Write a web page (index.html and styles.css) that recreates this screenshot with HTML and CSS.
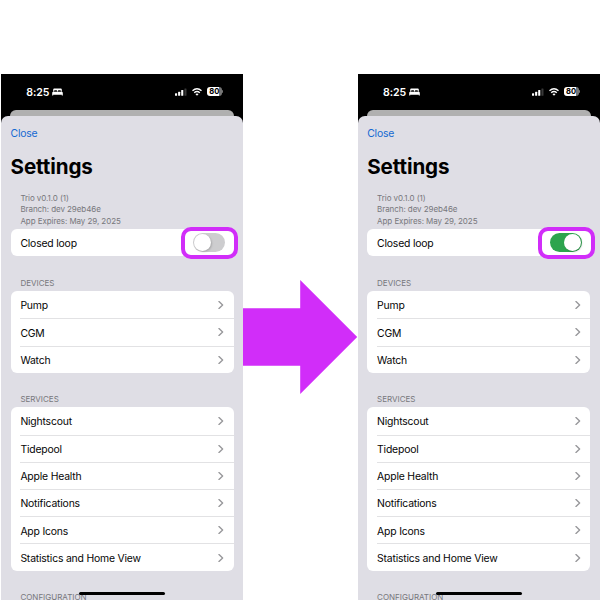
FILE: index.html
```html
<!DOCTYPE html>
<html lang="en">
<head>
<meta charset="utf-8">
<title>Closed loop setting</title>
<link rel="stylesheet" href="styles.css">
</head>
<body>
<svg class="defs" width="0" height="0">
  <symbol id="chevron" viewBox="0 0 6 8"><path d="M1 .6 4.6 4 1 7.4" fill="none" stroke="#98989b" stroke-width="1.4" stroke-linecap="round" stroke-linejoin="round"/></symbol>
  <symbol id="bed" viewBox="0 0 11 8"><path fill="#fff" d="M1.2 3.5V1.4Q1.2.4 2.2.4H8.8Q9.8.4 9.8 1.4V3.5H8.9V3Q8.9 2.3 8.2 2.3H6.6Q5.9 2.3 5.9 3V3.5H5.1V3Q5.1 2.3 4.4 2.3H2.8Q2.1 2.3 2.1 3V3.5ZM1.3 3.8H9.7Q10.8 3.8 10.8 5.1V7.5H9.8V6.7H1.2V7.5H.2V5.1Q.2 3.8 1.3 3.8Z"/></symbol>
  <symbol id="signal" viewBox="0 0 12 8"><g fill="#fff"><rect x="0" y="5.2" width="2.1" height="2.6" rx=".5"/><rect x="3.1" y="3.8" width="2.1" height="4" rx=".5"/><rect x="6.2" y="2.1" width="2.1" height="5.7" rx=".5"/><rect x="9.4" y=".5" width="2.1" height="7.3" rx=".5" opacity=".22"/></g></symbol>
  <symbol id="wifi" viewBox="0 0 10 8"><g fill="none" stroke="#fff" stroke-width="1.4"><path d="M.5 2.8Q5-1.3 9.5 2.8"/><path d="M2.2 4.7Q5 2.2 7.8 4.7"/></g><path fill="#fff" d="M3.4 6Q5 4.8 6.6 6L5 7.7Z"/></symbol>
</svg>
<main class="stage">
  <section class="phone">
    <header class="status">
      <span class="time">8:25</span><svg class="bed"><use href="#bed"/></svg>
      <svg class="signal"><use href="#signal"/></svg><svg class="wifi"><use href="#wifi"/></svg><span class="battery">80</span>
    </header>
    <div class="behind"></div>
    <div class="sheet">
      <a class="close">Close</a>
      <h1>Settings</h1>
      <p class="meta">Trio v0.1.0 (1)<br>Branch: dev 29eb46e<br>App Expires: May 29, 2025</p>
      <div class="card loop"><div class="row"><span>Closed loop</span><span class="marker"><span class="toggle"></span></span></div></div>
      <h2>DEVICES</h2>
      <div class="card">
        <div class="row"><span>Pump</span><svg><use href="#chevron"/></svg></div>
        <div class="row"><span>CGM</span><svg><use href="#chevron"/></svg></div>
        <div class="row"><span>Watch</span><svg><use href="#chevron"/></svg></div>
      </div>
      <h2>SERVICES</h2>
      <div class="card">
        <div class="row"><span>Nightscout</span><svg><use href="#chevron"/></svg></div>
        <div class="row"><span>Tidepool</span><svg><use href="#chevron"/></svg></div>
        <div class="row"><span>Apple Health</span><svg><use href="#chevron"/></svg></div>
        <div class="row"><span>Notifications</span><svg><use href="#chevron"/></svg></div>
        <div class="row"><span>App Icons</span><svg><use href="#chevron"/></svg></div>
        <div class="row"><span>Statistics and Home View</span><svg><use href="#chevron"/></svg></div>
      </div>
      <h2>CONFIGURATION</h2>
    </div>
    <div class="home"></div>
  </section>
  <svg class="arrow" viewBox="0 0 115 114"><path fill="#d12df9" d="M0 28.3H57.2V0L114.2 57 57.2 114V85.7H0Z"/></svg>
  <section class="phone">
    <header class="status">
      <span class="time">8:25</span><svg class="bed"><use href="#bed"/></svg>
      <svg class="signal"><use href="#signal"/></svg><svg class="wifi"><use href="#wifi"/></svg><span class="battery">80</span>
    </header>
    <div class="behind"></div>
    <div class="sheet">
      <a class="close">Close</a>
      <h1>Settings</h1>
      <p class="meta">Trio v0.1.0 (1)<br>Branch: dev 29eb46e<br>App Expires: May 29, 2025</p>
      <div class="card loop"><div class="row"><span>Closed loop</span><span class="marker"><span class="toggle on"></span></span></div></div>
      <h2>DEVICES</h2>
      <div class="card">
        <div class="row"><span>Pump</span><svg><use href="#chevron"/></svg></div>
        <div class="row"><span>CGM</span><svg><use href="#chevron"/></svg></div>
        <div class="row"><span>Watch</span><svg><use href="#chevron"/></svg></div>
      </div>
      <h2>SERVICES</h2>
      <div class="card">
        <div class="row"><span>Nightscout</span><svg><use href="#chevron"/></svg></div>
        <div class="row"><span>Tidepool</span><svg><use href="#chevron"/></svg></div>
        <div class="row"><span>Apple Health</span><svg><use href="#chevron"/></svg></div>
        <div class="row"><span>Notifications</span><svg><use href="#chevron"/></svg></div>
        <div class="row"><span>App Icons</span><svg><use href="#chevron"/></svg></div>
        <div class="row"><span>Statistics and Home View</span><svg><use href="#chevron"/></svg></div>
      </div>
      <h2>CONFIGURATION</h2>
    </div>
    <div class="home"></div>
  </section>
</main>
</body>
</html>
```
FILE: styles.css
```css
* { box-sizing: border-box; }
body { margin: 0; background: #fff; font-family: Inter, "Liberation Sans", sans-serif; color: #050505; }
.defs { position: absolute; }
.stage { width: 600px; height: 600px; padding: 74.4px 0 0 1px; display: flex; overflow: hidden; }
.phone { position: relative; width: 242.3px; height: 525.6px; flex: none; background: #000; overflow: hidden; display: flex; flex-direction: column; }
.status { height: 35.4px; flex: none; display: flex; align-items: center; padding: 0 21.5px 1px 25.3px; color: #fff; }
.time { font-size: 10.6px; font-weight: 600; width: 23px; letter-spacing: -.1px; white-space: nowrap; padding-top: 1px; }
.bed { width: 11px; height: 8px; margin-left: 2.7px; }
.signal { width: 12px; height: 8px; margin-left: auto; margin-right: 5px; }
.wifi { width: 10px; height: 8px; margin-right: 5px; }
.battery { position: relative; width: 15px; height: 9px; border-radius: 3px; background: linear-gradient(90deg, #fff 80%, #777 80%); color: #000; font-size: 7.6px; font-weight: 700; line-height: 9px; text-align: center; letter-spacing: -.1px; }
.battery::after { content: ""; position: absolute; left: 15.6px; top: 3px; width: 1px; height: 3px; border-radius: 0 1px 1px 0; background: #777; }
.behind { height: 12px; flex: none; margin: 0 9.3px; background: #b0b0b0; border-radius: 6px 6px 0 0; }
.sheet { position: relative; flex: 1; margin-top: -6px; background: #dfdee5; border-radius: 7px 7px 0 0; padding: 11.7px 9.6px 0 9.5px; display: flex; flex-direction: column; }
.close { color: #1469d2; font-size: 10.4px; line-height: 14px; height: 14px; letter-spacing: -.18px; }
h1 { margin: 12.5px 0 0; font-size: 20.6px; line-height: 25px; height: 25px; font-weight: 700; letter-spacing: -.1px; color: #000; }
.meta { margin: 14.3px 0 0 9.9px; font-size: 8px; line-height: 11.2px; height: 36px; color: #77777c; letter-spacing: -.07px; }
.card { flex: none; background: #fff; border-radius: 6px; }
.row { height: 27.2px; margin-left: 9.9px; padding-right: 9.5px; display: flex; align-items: center; justify-content: space-between; font-size: 10.4px; letter-spacing: -.19px; white-space: nowrap; }
.row > span:first-child { padding-top: 1.4px; }
.row + .row { border-top: 1px solid #e2e2e4; }
.row svg { width: 6px; height: 8px; }
.loop .row { padding-right: 0; }
h2 { margin: 18.2px 0 0 9.9px; height: 16.6px; line-height: 16px; font-size: 8px; font-weight: 400; color: #77777c; }
.loop + h2 { margin-top: 18.1px; }
.marker { flex: none; width: 57px; height: 32px; margin-right: -4.5px; border: 4px solid #d12df9; border-radius: 10px; display: flex; align-items: center; justify-content: center; background: #fff; position: relative; }
.toggle { width: 32px; height: 19px; margin-right: 1px; border-radius: 10px; background: #cdcdcf; padding: 1px; display: flex; }
.toggle::after { content: ""; width: 17px; height: 17px; border-radius: 50%; background: #fff; box-shadow: 1px 1px 2px rgba(0,0,0,.18); }
.toggle.on { background: #2da44e; justify-content: flex-end; }
.home { position: absolute; left: 78.3px; bottom: 4.6px; width: 86px; height: 3px; border-radius: 2px; background: #000; }
.arrow { width: 115px; height: 114px; flex: none; margin: 205.6px -.3px 0 -.3px; position: relative; }
```
